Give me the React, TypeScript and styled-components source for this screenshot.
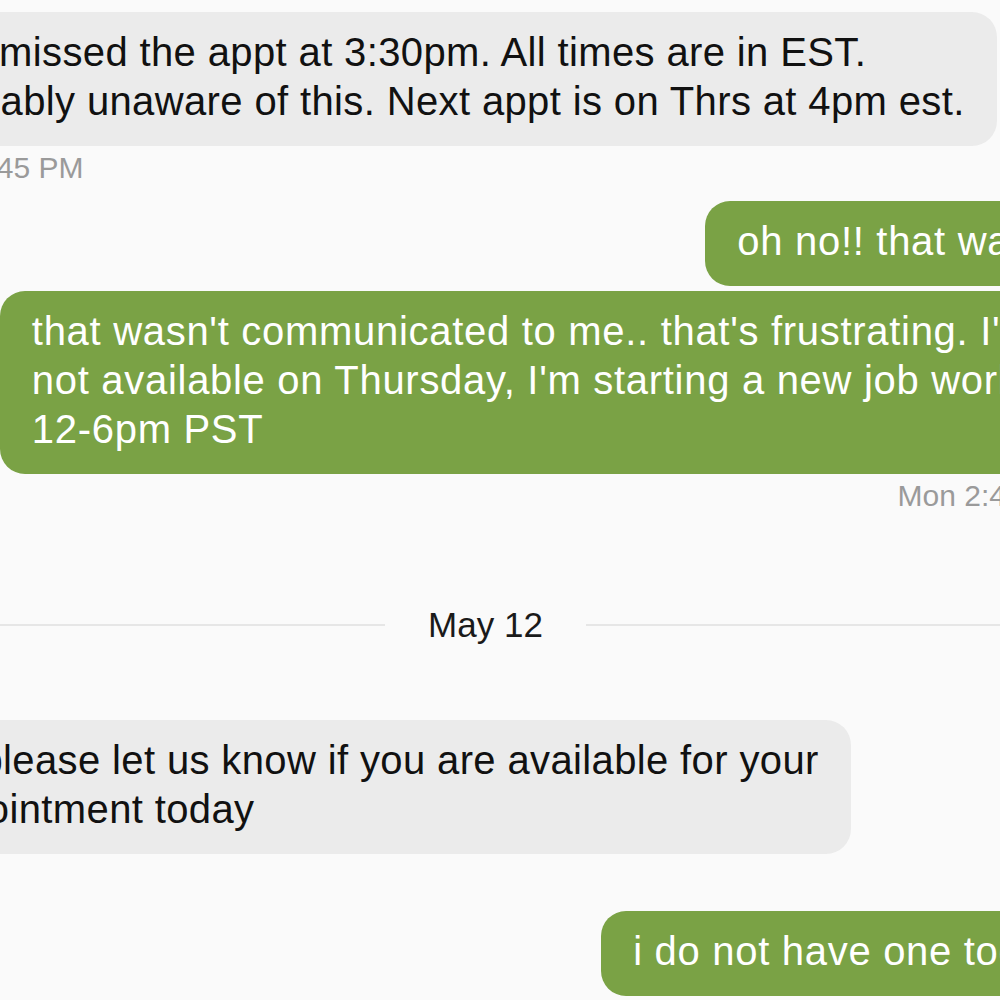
import React from "react";
import styled, { createGlobalStyle } from "styled-components";

const GlobalStyle = createGlobalStyle`
  html, body {
    margin: 0;
    padding: 0;
    background: #fafafa;
  }
  body {
    font-family: "Liberation Sans", Arial, Helvetica, sans-serif;
  }
`;

const Page = styled.div`
  width: 1000px;
  height: 1000px;
  overflow: hidden;
  background: #fafafa;
`;

const Thread = styled.div`
  display: flex;
  flex-direction: column;
  gap: 16px;
  width: 1219px;
  margin-left: -113px;
  padding-top: 12px;
`;

const Group = styled.div<{ $out?: boolean; $tail?: number }>`
  display: flex;
  flex-direction: column;
  gap: 5px;
  align-items: ${(p) => (p.$out ? "flex-end" : "flex-start")};
  margin-bottom: ${(p) => p.$tail ?? 0}px;
`;

const Bubble = styled.div<{ $out?: boolean }>`
  padding: 16px 32px 20px;
  border-radius: 25px;
  font-size: 40px;
  line-height: 49px;
  white-space: nowrap;
  background: ${(p) => (p.$out ? "#7aa245" : "#ebebeb")};
  color: ${(p) => (p.$out ? "#ffffff" : "#111111")};
  letter-spacing: ${(p) => (p.$out ? 0.7 : 0.37)}px;
`;

const Line = styled.span`
  display: block;
`;

const Stamp = styled.div<{ $out?: boolean }>`
  padding: ${(p) => (p.$out ? "0 30px 0 18px" : "0 18px")};
  font-size: 30px;
  line-height: 34px;
  color: #9a9a9a;
`;

const Divider = styled.div`
  display: flex;
  align-items: center;
  margin: 75px 22px 58px 0;
`;

const Rule = styled.div`
  flex: 1;
  height: 2px;
  background: #e6e6e6;
`;

const DividerLabel = styled.span`
  margin: 0 43px;
  font-size: 35px;
  line-height: 42px;
  color: #1a1a1a;
`;

type Msg = { lines: string[] };

const Message = ({ lines, out }: Msg & { out?: boolean }) => (
  <Bubble $out={out}>
    {lines.map((l, i) => (
      <Line key={i}>{l}</Line>
    ))}
  </Bubble>
);

export default function App() {
  return (
    <Page>
      <GlobalStyle />
      <Thread>
        <Group>
          <Message
            lines={[
              "You missed the appt at 3:30pm. All times are in EST.",
              "probably unaware of this. Next appt is on Thrs at 4pm est.",
            ]}
          />
          <Stamp>Mon 2:45 PM</Stamp>
        </Group>

        <Group $out>
          <Message out lines={["oh no!! that wasn't"]} />
          <Message
            out
            lines={[
              "that wasn't communicated to me.. that's frustrating. I'm",
              "not available on Thursday, I'm starting a new job working",
              "12-6pm PST",
            ]}
          />
          <Stamp $out>Mon 2:47 PM</Stamp>
        </Group>

        <Divider>
          <Rule />
          <DividerLabel>May 12</DividerLabel>
          <Rule />
        </Divider>

        <Group $tail={41}>
          <Message
            lines={[
              "Hi, please let us know if you are available for your",
              "appointment today",
            ]}
          />
        </Group>

        <Group $out>
          <Message out lines={["i do not have one today."]} />
        </Group>
      </Thread>
    </Page>
  );
}
